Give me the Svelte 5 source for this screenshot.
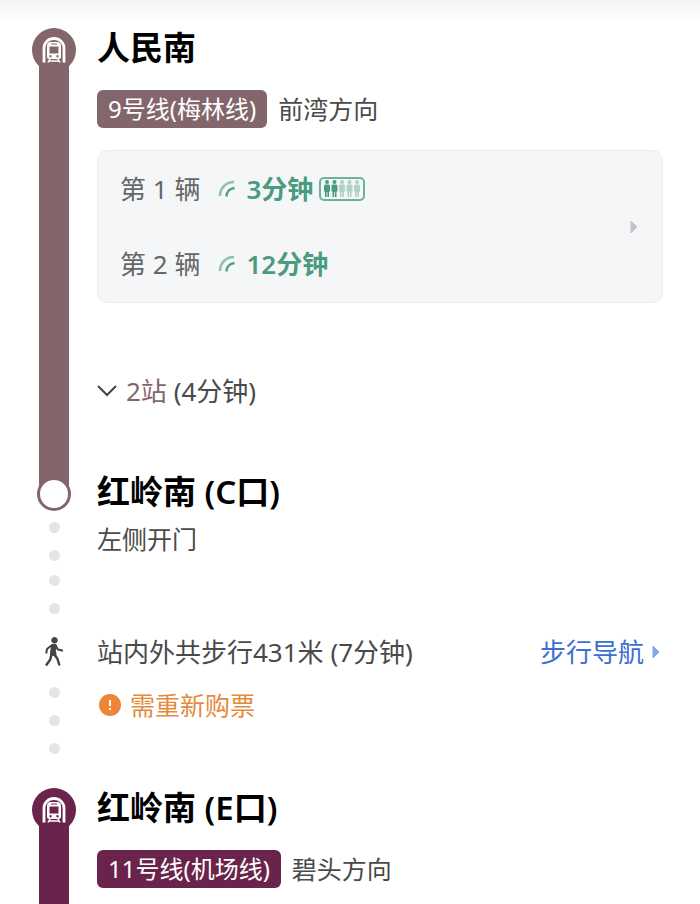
<script>
  let legs = [
    {
      id: 9,
      station: '人民南',
      line: '9号线(梅林线)',
      direction: '前湾方向',
      theme: 'mauve',
      trains: [
        { label: '第 1 辆', wait: '3分钟', crowd: 2 },
        { label: '第 2 辆', wait: '12分钟', crowd: 0 }
      ],
      stops: '2站',
      duration: '(4分钟)'
    },
    {
      id: 11,
      station: '红岭南 (E口)',
      line: '11号线(机场线)',
      direction: '碧头方向',
      theme: 'plum',
      trains: [],
      stops: '',
      duration: ''
    }
  ];

  let expanded = $state(false);
</script>

{#snippet metroIcon()}
  <svg class="metro" viewBox="0 0 44 44" aria-hidden="true">
    <path d="M12 34.500V20a10 9.500 0 0 1 20 0v14.500" fill="none" stroke="#fff" stroke-width="2.800" />
    <path
      fill="#fff"
      fill-rule="evenodd"
      d="M19 14h6a4 4 0 0 1 4 4v10.500a2.500 2.500 0 0 1-2.500 2.500h-9a2.500 2.500 0 0 1-2.500-2.500V18a4 4 0 0 1 4-4zM19 15.500v1h6v-1zM17.500 18.500v7h9v-7zM17.300 28.200a1.200 1.200 0 1 0 2.400 0a1.200 1.200 0 1 0-2.400 0zM24.300 28.200a1.200 1.200 0 1 0 2.400 0a1.200 1.200 0 1 0-2.400 0z"
    />
    <path d="M18 31l-2 3.500M26 31l2 3.500M17 33h10" fill="none" stroke="#fff" stroke-width="1.500" />
  </svg>
{/snippet}

{#snippet dots(count)}
  <div class="dots">
    {#each Array(count) as _}
      <span class="dot"></span>
    {/each}
  </div>
{/snippet}

{#snippet leg(item)}
  <section class="row leg {item.theme}">
    <div class="rail">
      <span class="node">{@render metroIcon()}</span>
      <span class="track"></span>
    </div>
    <div class="content">
      <h2>{item.station}</h2>
      <div class="line">
        <span class="badge">{item.line}</span>
        <span>{item.direction}</span>
      </div>

      {#if item.trains.length > 0}
        <button class="card">
          <span class="trains">
            {#each item.trains as train}
              <span class="train">
                <span class="label">{train.label}</span>
                <svg class="signal" viewBox="0 0 18 18" aria-hidden="true">
                  <path d="M2 16C2 8 8 2 16 2" opacity="0.6" />
                  <path d="M8.500 16.500c0-5 3.500-8 8-8.500" />
                </svg>
                <strong>{train.wait}</strong>
                {#if train.crowd > 0}
                  <svg class="crowd" viewBox="0 0 46 24" aria-hidden="true">
                    <rect x="1" y="1" width="44" height="22" rx="4" />
                    {#each Array(5) as _, i}
                      <g class:empty={i >= train.crowd} transform="translate({5 + i * 7.5} 3)">
                        <circle cx="3" cy="2" r="2" />
                        <path d="M1.500 4.500h3q1.500 0 1.500 1.500v5.500H5V17H3.400v-5h-.800v5H1v-5.500H0V6q0-1.500 1.500-1.500z" />
                      </g>
                    {/each}
                  </svg>
                {/if}
              </span>
            {/each}
          </span>
          <svg class="arrow" viewBox="0 0 8 14" aria-hidden="true">
            <path d="M1 1v12l6-6z" />
          </svg>
        </button>
      {/if}

      {#if item.stops}
        <button class="stops" aria-expanded={expanded} onclick={() => expanded = !expanded}>
          <svg class="chevron" class:open={expanded} viewBox="0 0 20 12" aria-hidden="true">
            <path d="M1 1l9 9 9-9" />
          </svg>
          <span><span class="count">{item.stops}</span> {item.duration}</span>
        </button>
      {/if}
    </div>
  </section>
{/snippet}

<main>
  <div class="shade"></div>

  {@render leg(legs[0])}

  <section class="row mauve">
    <div class="rail">
      <span class="stub"></span>
      <span class="ring"></span>
      {@render dots(2)}
      {@render dots(2)}
    </div>
    <div class="content exit">
      <h2>红岭南 (C口)</h2>
      <p>左侧开门</p>
    </div>
  </section>

  <section class="row">
    <div class="rail">
      <svg class="walker" viewBox="0 0 20 30" aria-hidden="true">
        <circle cx="10.500" cy="3.300" r="2.800" />
        <path d="M11.500 8.500l2.500 4 5 1.200M7.500 8.500l-4.500 3.500-.800 4.500" fill="none" stroke-width="2" />
        <path d="M7.500 7.500h4.500l.700 1.500-1.200 4.500.500 4.500-1 1-4.500-1.500z" stroke-width="1" />
        <path d="M7.500 17l-1.200 5.500-4.300 6M10.500 17.500l3 4.500 2 6.500" fill="none" stroke-width="2.400" />
      </svg>
      {@render dots(3)}
    </div>
    <div class="content transfer">
      <div class="walk">
        <p>站内外共步行431米 (7分钟)</p>
        <a href="#walk">
          步行导航
          <svg class="arrow" viewBox="0 0 8 14" aria-hidden="true">
            <path d="M1 1v12l6-6z" />
          </svg>
        </a>
      </div>
      <p class="notice">
        <svg class="alert" viewBox="0 0 22 22" aria-hidden="true">
          <circle cx="11" cy="11" r="11" />
          <path d="M11 6v6M11 14v2" />
        </svg>
        需重新购票
      </p>
    </div>
  </section>

  {@render leg(legs[1])}
</main>

<style>
  :global(body) {
    margin: 0;
    background: #fff;
  }

  main {
    display: flex;
    flex-direction: column;
    min-height: 100vh;
    font-family: 'Noto Sans', 'Noto Sans CJK SC', sans-serif;
    font-size: 25px;
    line-height: 36px;
    color: #4a4a4a;
  }

  .shade {
    height: 28px;
    background: linear-gradient(#f5f5f5, #fff 24px);
  }

  .row {
    display: flex;
    gap: 21px;
    padding: 0 37px 0 32px;
  }

  .leg:last-child {
    flex: 1;
  }

  .mauve {
    --line: #83666b;
  }

  .plum {
    --line: #6a244c;
  }

  .rail {
    flex: none;
    width: 44px;
    display: flex;
    flex-direction: column;
    align-items: center;
  }

  .node {
    width: 44px;
    height: 44px;
    border-radius: 50%;
    background: var(--line);
  }

  .metro {
    display: block;
  }

  .track {
    flex: 1;
    width: 30px;
    margin-top: -8px;
    background: var(--line);
  }

  .stub {
    width: 30px;
    height: 16px;
    background: var(--line);
  }

  .ring {
    box-sizing: border-box;
    width: 34px;
    height: 34px;
    margin-top: -11px;
    border: 3px solid var(--line);
    border-radius: 50%;
    background: #fff;
  }

  .dots {
    display: flex;
    flex-direction: column;
    gap: 17px;
    padding-top: 11px;
  }

  .dots + .dots {
    padding-top: 14px;
  }

  .dot {
    width: 11px;
    height: 11px;
    border-radius: 50%;
    background: #e4e4e4;
  }

  .content {
    flex: 1;
    min-width: 0;
  }

  h2 {
    margin: 0;
    font-size: 33px;
    line-height: 40px;
    font-weight: 600;
    color: #000;
  }

  p {
    margin: 0;
  }

  button {
    margin: 0;
    border: 0;
    padding: 0;
    background: none;
    font: inherit;
    color: inherit;
    text-align: left;
    cursor: pointer;
  }

  .line {
    display: flex;
    align-items: center;
    gap: 11px;
    margin-top: 22px;
  }

  .badge {
    padding: 0 11px;
    border-radius: 6px;
    background: var(--line);
    color: #fff;
    font-size: 24px;
    line-height: 38px;
  }

  .card {
    display: flex;
    align-items: center;
    justify-content: space-between;
    box-sizing: border-box;
    width: 100%;
    margin-top: 22px;
    padding: 20px 24px 20px 22px;
    border: 1px solid #ebedee;
    border-radius: 10px;
    background: #f5f6f8;
  }

  .card,
  .stops,
  .walk {
    font-size: 26px;
  }

  .trains {
    display: flex;
    flex-direction: column;
    gap: 39px;
  }

  .train {
    display: flex;
    align-items: center;
  }

  .label {
    color: #666;
  }

  .signal {
    width: 18px;
    height: 18px;
    margin: 0 10px 0 18px;
    fill: none;
    stroke: #4f9f86;
    stroke-width: 2.5;
  }

  strong {
    font-weight: 600;
    color: #4a9b80;
  }

  .crowd {
    width: 46px;
    height: 24px;
    margin-left: 6px;
    fill: #4a9b80;
  }

  .crowd rect {
    fill: none;
    stroke: #6fb19c;
    stroke-width: 2;
  }

  .empty {
    opacity: 0.4;
  }

  .arrow {
    width: 8px;
    height: 14px;
    fill: #c2c4c7;
    stroke: #c2c4c7;
    stroke-linejoin: round;
  }

  .stops {
    display: flex;
    align-items: center;
    gap: 9px;
    margin: 70px 0 63px;
  }

  .chevron {
    width: 20px;
    height: 12px;
    fill: none;
    stroke: #444;
    stroke-width: 2;
  }

  .chevron.open {
    transform: rotate(180deg);
  }

  .count {
    color: #83666b;
  }

  .exit {
    padding-bottom: 77px;
  }

  .exit p {
    margin-top: 9px;
  }

  .walker {
    width: 20px;
    height: 30px;
    margin: 3px 0 9px;
    fill: #444;
    stroke: #444;
    stroke-linejoin: round;
  }

  .transfer {
    padding-bottom: 65px;
  }

  .walk {
    display: flex;
    justify-content: space-between;
  }

  a {
    display: flex;
    align-items: center;
    gap: 8px;
    padding-right: 3px;
    color: #3c6fd0;
    text-decoration: none;
  }

  a .arrow {
    fill: #82a8ee;
    stroke: #82a8ee;
  }

  .notice {
    display: flex;
    align-items: center;
    gap: 9px;
    margin-top: 17px;
    color: #e58a3c;
  }

  .alert {
    width: 22px;
    height: 22px;
    margin-left: 2px;
    fill: #ee8639;
  }

  .alert path {
    stroke: #fff;
    stroke-width: 2;
  }
</style>
